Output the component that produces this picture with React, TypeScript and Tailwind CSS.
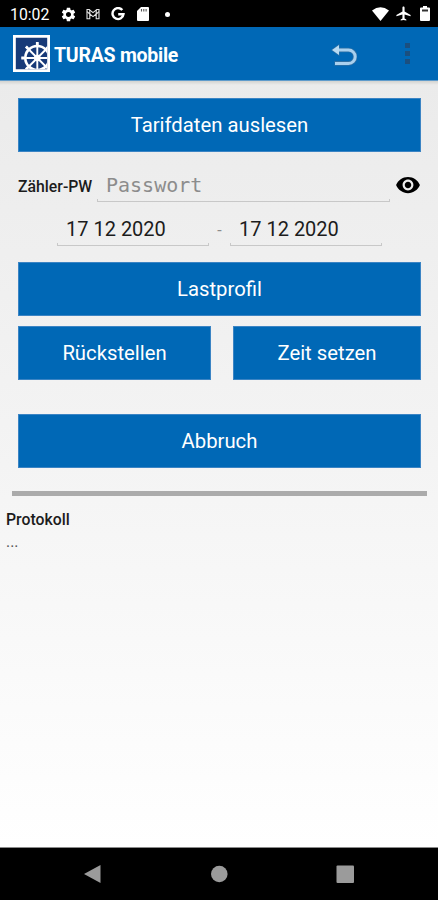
import React from "react";
import {
  MdSettings,
  MdAirplanemodeActive,
  MdVisibility,
} from "react-icons/md";

type ButtonProps = {
  label: string;
  className?: string;
};

const Button = ({ label, className = "w-full" }: ButtonProps) => (
  <button
    className={`h-[54px] bg-[#0068b6] border border-[#3b84c4] text-white text-[20.3px] leading-none ${className}`}
  >
    {label}
  </button>
);

type FieldProps = {
  className: string;
  children: React.ReactNode;
};

// Text field with the small upturned ends of the old Android underline
const Field = ({ className, children }: FieldProps) => (
  <div className={`flex flex-col justify-end ${className}`}>
    <div className="pl-[9px] whitespace-pre">{children}</div>
    <div className="h-[3px] border border-t-0 border-[#c8c8c8]" />
  </div>
);

const StatusBar = () => (
  <div className="h-[27px] bg-black text-white flex items-center pl-[10px] pr-2 text-[15.8px]">
    <span className="w-[50px] pt-[2px] leading-none">10:02</span>
    <MdSettings size={17} className="mt-px" />
    <svg className="ml-[9px] mt-px" width="14" height="12" viewBox="0 0 14 12" fill="none" stroke="#e4e4e4" strokeWidth="1.1">
      <path d="M1 1.5h2.2L7 4.6l3.8-3.1H13v9.2h-2.8V6L7 8.6 3.8 6v4.7H1z" />
      <path d="M3.8 2v4M10.2 2v4M1 3.6 3.8 6M13 3.6 10.2 6" />
    </svg>
    <svg className="ml-[11px] mt-px" width="14" height="14" viewBox="0 0 14 14" fill="none" stroke="#fff" strokeWidth="2.4">
      <path d="M11.3 3.1A5.5 5.5 0 1 0 12.5 7.2H7.2" />
    </svg>
    <svg className="ml-[12px]" width="12" height="14" viewBox="0 0 12 14">
      <path d="M4 0h7q1 0 1 1v12q0 1-1 1H1q-1 0-1-1V4z" fill="#fff" />
      <path d="M4.5 2v2.5M6.8 2v2.5M9.1 2v2.5" stroke="#555" strokeWidth="1.1" />
    </svg>
    <span className="ml-[16px] mt-px size-[5px] rounded-full bg-white" />
    <div className="ml-auto flex items-center">
      <svg width="17" height="14" viewBox="0 0 17 14" fill="#fff">
        <path d="M0 3.5Q8.5-3.2 17 3.5L8.5 14z" />
      </svg>
      <MdAirplanemodeActive size={17} className="ml-[6px]" />
      <svg className="ml-[8px]" width="10" height="15" viewBox="0 0 10 15">
        <path d="M3 0h4v1.5h2q1 0 1 1V14q0 1-1 1H1q-1 0-1-1V2.5q0-1 1-1h2z" fill="#fff" />
        <path d="M2 3.5h6v2H2z" fill="#333" />
      </svg>
    </div>
  </div>
);

const Logo = () => (
  <svg width="37" height="37" viewBox="0 0 37 37">
    <path d="M0 0h37v37H0z" fill="#fff" />
    <path d="M2.8 2.8h31.4v31.4H2.8z" fill="#173a78" />
    <svg x="2.8" y="2.8" width="31.4" height="31.4" viewBox="2.8 2.8 31.4 31.4" fill="none" stroke="#fff">
      <circle cx="24.3" cy="23" r="12" strokeWidth="2.6" />
      <path d="M24.3 7.5v31M8.8 23h31M13.3 12l22 22M35.3 12l-22 22" strokeWidth="1.9" />
      <path d="M24.3 7v3M8.3 23h3M12.9 11.6l2 2M35.7 11.6l-2 2M12.9 34.4l2-2" strokeWidth="2.8" />
      <circle cx="24.3" cy="23" r="3" fill="#fff" />
    </svg>
  </svg>
);

const Header = () => (
  <div className="h-[54px] bg-[#0068b6] border-b border-[#5f9bcb] flex items-center pl-[13px] pr-[26px]">
    <Logo />
    <span className="ml-1 pt-[4px] text-white font-bold text-[19.5px] tracking-[-0.25px]">TURAS mobile</span>
    <svg className="ml-auto mt-[2px]" width="26" height="24" viewBox="0 0 26 24" fill="none">
      <path d="M8 7h9.500a6.700 6.700 0 0 1 0 13.400H3.500" stroke="#2f6fa3" strokeWidth="4.600" />
      <path d="M0 7 8.500.800v12.400z" fill="#2f6fa3" />
      <path d="M7 7h10.500a6.700 6.700 0 0 1 0 13.400H4" stroke="#a9d0ee" strokeWidth="3" />
      <path d="M1 7 8 2v10z" fill="#b9daf2" />
    </svg>
    <div className="ml-[48px] mr-[2px] flex flex-col gap-[3px]">
      <span className="size-[5px] bg-[#1b4f7f]" />
      <span className="size-[5px] bg-[#1b4f7f]" />
      <span className="size-[5px] bg-[#1b4f7f]" />
    </div>
  </div>
);

const NavBar = () => (
  <div className="h-[53px] bg-black border-t border-[#8a8a8a] flex items-center pl-[84px] pr-[84px]">
    <svg width="270" height="18" viewBox="0 0 270 18" fill="#9b9b9b">
      <path d="M16.5 0v18L0 9z" />
      <circle cx="135.3" cy="9" r="8.3" />
      <rect x="252.5" y=".5" width="17.5" height="17.5" rx="1" />
    </svg>
  </div>
);

const App = () => {
  return (
    <div className="w-full h-screen flex flex-col overflow-hidden font-[Roboto,sans-serif] text-[#1c1c1c]">
      <StatusBar />
      <Header />
      <main className="flex-1 bg-linear-to-b from-[#ebebeb] via-[#f4f4f4] to-white">
        <div className="h-1 bg-linear-to-b from-[#d3d3d0] to-transparent" />
        <div className="pl-[18px] pr-[17px] pt-[13px]">
          <Button label="Tarifdaten auslesen" />
          <div className="flex h-[50px]">
            <span className="w-[79px] pt-[25px] text-[15.8px] leading-[20px] font-medium whitespace-nowrap">
              Zähler-PW
            </span>
            <Field className="w-[293px]">
              <span className="font-['DejaVu_Sans_Mono',monospace] text-[20px] leading-[26px] text-[#8c8c8c]">
                Passwort
              </span>
            </Field>
            <MdVisibility size={26} className="ml-[5px] mt-[20px] text-black" />
          </div>
          <div className="flex h-[44px] pl-[39px] text-[20px] leading-[27px]">
            <Field className="w-[152px]">17 12 2020</Field>
            <span className="w-[21px] pt-[17px] text-center text-[16px] leading-[24px] text-[#8c8c8c]">-</span>
            <Field className="w-[152px]">17 12 2020</Field>
          </div>
          <Button label="Lastprofil" className="w-full mt-4" />
          <div className="flex justify-between mt-[10px]">
            <Button label="Rückstellen" className="w-[193px]" />
            <Button label="Zeit setzen" className="w-[188px]" />
          </div>
          <Button label="Abbruch" className="w-full mt-[34px]" />
        </div>
        <div className="mt-[23px] ml-3 mr-[11px] h-[5px] bg-[#ababab]" />
        <div className="px-[6px] pt-[14px] text-[15.8px] leading-[20px]">
          <p className="font-medium">Protokoll</p>
          <p className="mt-[2px] text-[#555]">...</p>
        </div>
      </main>
      <NavBar />
    </div>
  );
};

export default App;
